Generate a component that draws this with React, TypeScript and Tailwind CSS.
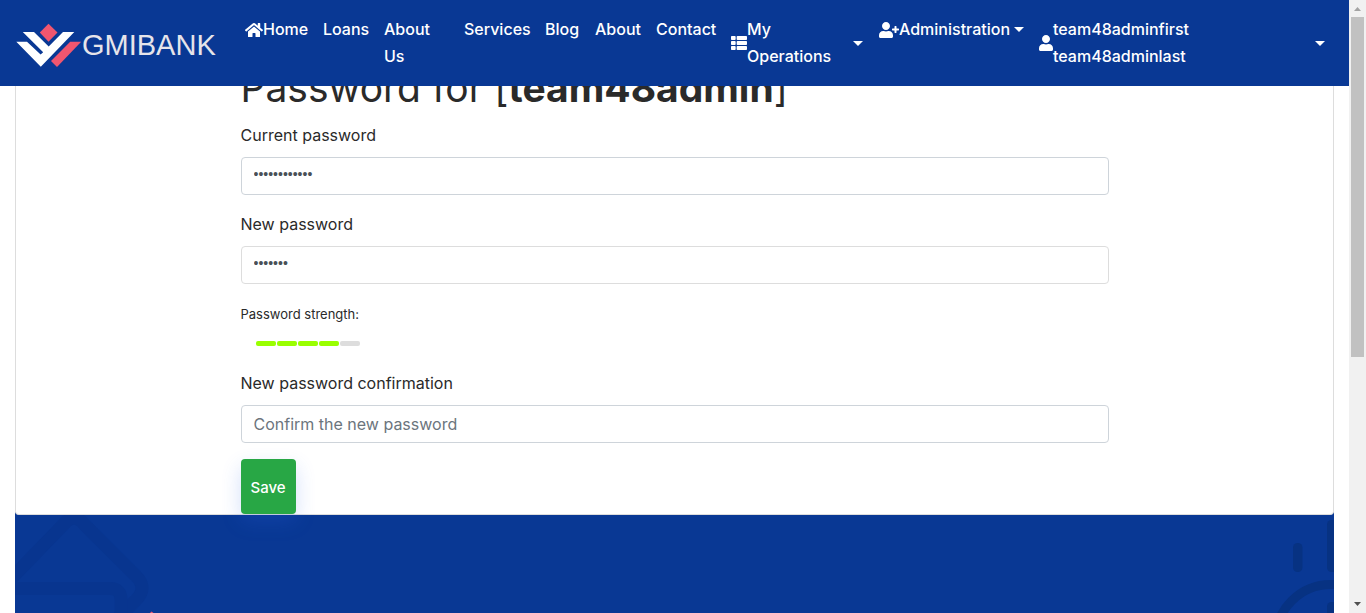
import type { ReactNode } from "react";
import { FaHome, FaThList, FaUser, FaUserPlus } from "react-icons/fa";

function Logo() {
  return (
    <a href="#home" className="flex w-[237px] shrink-0 items-center pt-1 pl-4">
      <svg viewBox="16 23 66 45" className="h-[45px] w-[66px] shrink-0" aria-hidden="true">
        <path d="M48.5 23.7 57.5 32.6 48.5 41.8 39.8 32.6Z" fill="#f0566f" />
        <path d="M22.8 32H34L48.7 46.6 63 32H74.3L40.8 66.8 16.3 41.8H27L40.6 54.6 43.2 52.2Z" fill="#fff" />
        <path d="M70.2 41.8H81.2L57 67 51 61Z" fill="#f0566f" />
      </svg>
      <span className="font-['Liberation_Sans',Arial,sans-serif] text-[29px] leading-8 text-[#e6e4ea]">GMIBANK</span>
    </a>
  );
}

function Caret() {
  return (
    <svg viewBox="0 0 10 5" className="h-[5px] w-[10px] shrink-0" aria-hidden="true">
      <path d="M0 0H10L5 5Z" fill="currentColor" />
    </svg>
  );
}

function NavLink({ width, children }: { width: string; children: ReactNode }) {
  return (
    <a href="#nav" className={`flex items-center self-start px-2 ${width}`}>
      {children}
    </a>
  );
}

function Field({ id, label, value, placeholder, look }: { id: string; label: string; value?: string; placeholder?: string; look: string }) {
  return (
    <div className="flex flex-col gap-2">
      <label htmlFor={id} className="leading-[27px]">{label}</label>
      <input
        id={id}
        type="password"
        defaultValue={value}
        placeholder={placeholder}
        className={`h-[38px] w-full rounded border bg-white px-3 text-[#495057] placeholder:text-[#6c757d] ${look}`}
      />
    </div>
  );
}

const strength = ["bg-[#99ff00]", "bg-[#99ff00]", "bg-[#99ff00]", "bg-[#99ff00]", "bg-[#dddddd]"];

export default function App() {
  return (
    <div className="flex h-screen overflow-hidden bg-white font-[Inter,sans-serif] text-base text-[#2a2a2a]">
      <div className="flex min-w-0 flex-1 flex-col">
        <nav className="z-10 flex shrink-0 items-center bg-[#093894] py-4 pr-4 text-base leading-[27px] font-medium text-white">
          <Logo />
          <div className="flex min-w-0 flex-1">
            <NavLink width="w-[78px]"><FaHome className="h-4 w-[18px] shrink-0" />Home</NavLink>
            <NavLink width="w-[61px]">Loans</NavLink>
            <NavLink width="w-[80px]"><span className="w-12">About Us</span></NavLink>
            <NavLink width="w-[81px]">Services</NavLink>
            <NavLink width="w-[50px]">Blog</NavLink>
            <NavLink width="w-[61px]">About</NavLink>
            <NavLink width="w-[75px]">Contact</NavLink>
            <button type="button" className="flex w-[148px] items-center px-2 text-left">
              <FaThList className="size-4 shrink-0" />
              <span className="w-24">My Operations</span>
              <span className="ml-auto"><Caret /></span>
            </button>
            <button type="button" className="flex w-[160px] items-center gap-1 self-start px-2 text-left">
              <span className="flex items-center"><FaUserPlus className="h-4 w-5 shrink-0" />Administration</span>
              <Caret />
            </button>
            <button type="button" className="flex min-w-0 flex-1 items-center px-2 text-left">
              <FaUser className="h-4 w-[14px] shrink-0" />
              <span className="w-36">team48adminfirst team48adminlast</span>
              <span className="ml-auto"><Caret /></span>
            </button>
          </div>
        </nav>

        <main className="flex min-h-0 flex-1 flex-col overflow-hidden px-[15px]">
          <section className="z-[1] flex shrink-0 justify-center rounded-b border border-t-0 border-[#dddddd] bg-white">
            <form className="-mt-[22px] flex w-[868px] flex-col items-start" onSubmit={(e) => e.preventDefault()}>
              <h2 className="mb-[10px] text-[39px] leading-[48px]">
                Password for [<b className="font-bold">team48admin</b>]
              </h2>
              <div className="flex w-full flex-col gap-4">
                <Field
                  id="current"
                  label="Current password"
                  value="abcdefghijkl"
                  look="border-[#ced4da] pb-1 font-['Liberation_Sans',Arial,sans-serif] text-sm"
                />
                <Field
                  id="new"
                  label="New password"
                  value="abcdefg"
                  look="border-[#dddddd] pb-1 font-['Liberation_Sans',Arial,sans-serif] text-sm"
                />
                <div className="flex h-[54px] flex-col gap-3 pt-1">
                  <small className="text-[13px] leading-5">Password strength:</small>
                  <ul className="flex gap-px pt-[5px] pl-[15px]" aria-label="Password strength">
                    {strength.map((color, i) => (
                      <li key={i} className={`h-[5px] w-5 rounded-[2px] ${color}`} />
                    ))}
                  </ul>
                </div>
                <Field
                  id="confirm"
                  label="New password confirmation"
                  placeholder="Confirm the new password"
                  look="border-[#ced4da] text-base"
                />
              </div>
              <button type="submit" className="mt-4 size-[55px] rounded bg-[#28a745] pt-1 text-[15px] font-medium text-white shadow-[0_8px_20px_rgba(40,100,230,0.2)]">
                Save
              </button>
            </form>
          </section>
          <footer className="-mt-[3px] flex flex-1 items-stretch justify-between bg-[#093894]">
            <svg viewBox="15 512 150 101" className="h-[101px] w-[150px]" aria-hidden="true">
              <g fill="none" stroke="#08358f" strokeWidth="13">
                <path d="M5 585 64 524Q74 512 84 524L136 576Q148 588 136 600L116 620" />
                <path d="M5 588.500H110Q121 588.500 121 600V620" />
              </g>
              <path d="M150 613 151.500 611.500 153.500 613Z" fill="#f0566f" />
            </svg>
            <svg viewBox="1264 512 70 101" className="h-[101px] w-[70px]" aria-hidden="true">
              <g fill="#073282">
                <rect x="1293" y="543" width="9.500" height="29" rx="4.500" />
                <rect x="1327" y="520" width="12" height="52" rx="4.500" />
                <rect x="1327" y="602" width="12" height="20" rx="4.500" />
              </g>
              <circle cx="1331" cy="640" r="55.500" fill="none" stroke="#073282" strokeWidth="9" />
            </svg>
          </footer>
        </main>
      </div>

      <div className="flex w-[17px] shrink-0 flex-col bg-[#f1f1f1]" aria-hidden="true">
        <svg viewBox="0 0 17 17" className="size-[17px]"><path d="M5 11 8.500 7 12 11Z" fill="#a3a3a3" /></svg>
        <div className="mx-[2px] flex-1"><div className="h-[58.7%] bg-[#c1c1c1]" /></div>
        <svg viewBox="0 0 17 17" className="size-[17px]"><path d="M5 6H12L8.500 10Z" fill="#505050" /></svg>
      </div>
    </div>
  );
}
